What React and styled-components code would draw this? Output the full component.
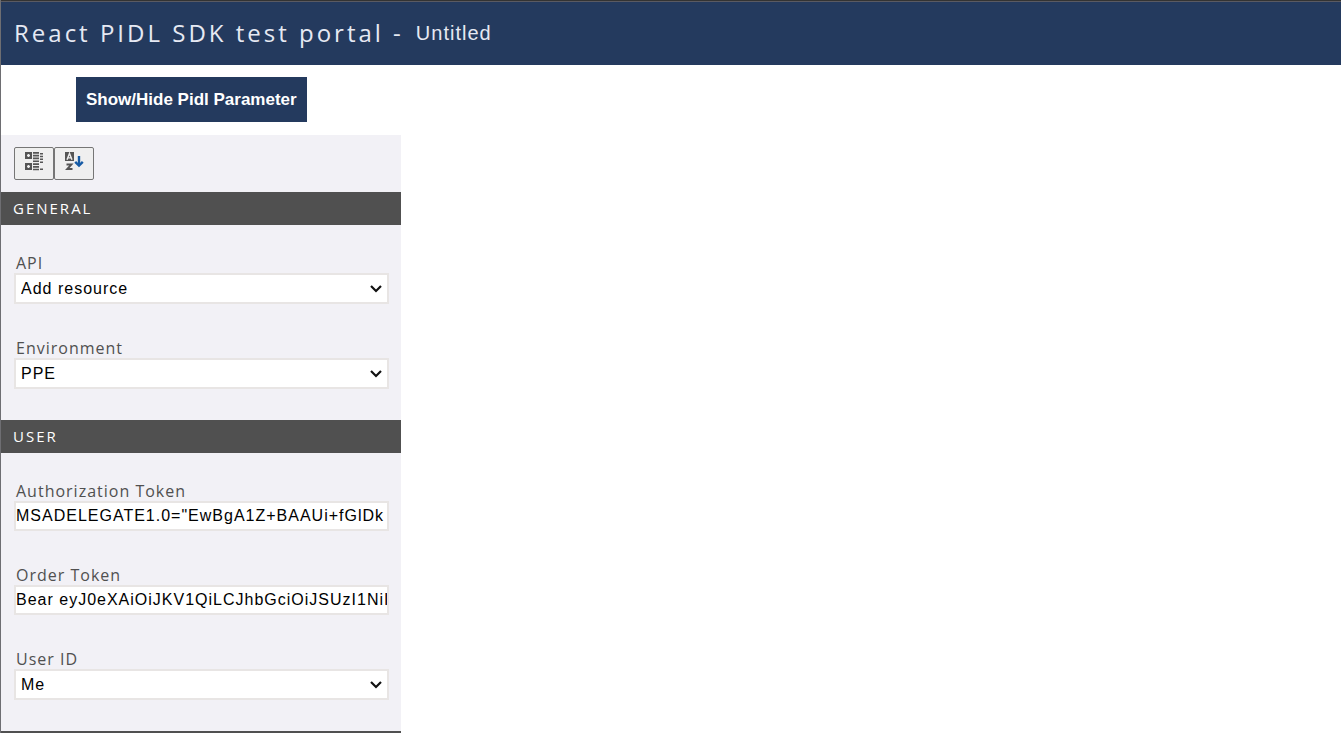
import React from "react";
import styled, { createGlobalStyle } from "styled-components";

const ui = '"Open Sans", "Noto Sans", sans-serif';
const control = '"Liberation Sans", Arial, sans-serif';

const GlobalStyle = createGlobalStyle`
  * { box-sizing: border-box; }
  body { margin: 0; background: #fff; font-family: ${ui}; }
`;

const Page = styled.div`
  min-height: 100vh;
  border-left: 1px solid #6e6e72;
`;

const Header = styled.header`
  display: flex;
  align-items: center;
  gap: 12px;
  height: 65px;
  padding: 0 13px;
  border-top: 1px solid #333;
  background: #243a5e;
  box-shadow: inset 0 1px #5a5a62;
  color: #e6e9f3;
`;

const Title = styled.h1`
  margin: 0;
  font: 400 24px/32px ${ui};
  letter-spacing: 3px;
  white-space: nowrap;
`;

const FileName = styled.span`
  font: 400 20px/32px ${control};
  letter-spacing: 1px;
`;

const Actions = styled.div`
  padding: 12px 75px 13px;
`;

const ToggleButton = styled.button`
  display: block;
  height: 45px;
  padding: 0 10px;
  border: 0;
  background: #243a5e;
  color: #fff;
  font: 700 17px/20px ${control};
  white-space: nowrap;
`;

const Panel = styled.form`
  width: 100%;
  max-width: 400px;
  background: #f2f1f6;
  border-bottom: 2px solid #505050;
`;

const SortBar = styled.div`
  display: flex;
  padding: 12px 13px;
`;

const SortButton = styled.button`
  display: flex;
  justify-content: center;
  width: 40px;
  height: 33px;
  padding: 3px 0 0;
  border: 1px solid #767676;
  border-radius: 2px;
  background: #efefef;
`;

const SectionTitle = styled.h2`
  margin: 0;
  padding: 0 12px 1px;
  background: #505050;
  color: #fff;
  font: 400 15px/32px ${ui};
  letter-spacing: 2px;
`;

const Fields = styled.div`
  display: flex;
  flex-direction: column;
  gap: 34px;
  padding: 28px 12px 31px 13px;
`;

const Field = styled.div`
  display: flex;
  flex-direction: column;
`;

const Label = styled.label`
  padding-left: 2px;
  color: #505050;
  font: 400 16px/20px ${ui};
  letter-spacing: 1px;
`;

const SelectBox = styled.div`
  position: relative;
`;

const Select = styled.select`
  display: block;
  width: 100%;
  height: 31px;
  padding: 0 26px 0 5px;
  border: 2px solid #e8e5e4;
  border-radius: 0;
  appearance: none;
  background: #fff;
  color: #000;
  font: 400 16px/20px ${control};
  letter-spacing: 1px;
`;

const Chevron = styled.svg`
  position: absolute;
  top: 11px;
  right: 6px;
  width: 14px;
  height: 10px;
  pointer-events: none;
`;

const TextInput = styled.input`
  width: 100%;
  height: 30px;
  padding: 0;
  border: 2px solid #e8e5e4;
  background: #fff;
  color: #000;
  font: 400 16px/20px ${control};
  letter-spacing: 1px;
`;

function GroupedIcon() {
  return (
    <svg width="20" height="20" viewBox="0 0 20 20" fill="#555" aria-hidden="true">
      <path fillRule="evenodd" d="M1 1h7v7H1zM3 3.8v1.4h.8V6h1.4v-.8H6V3.8h-.8V3H3.8v.8zM1 12h7v7H1zM3 14.8v1.4h.8v.8h1.4v-.8H6v-1.4h-.8V14H3.8v.8z" />
      <path d="M9 1h6v1.7H9zM9 3.8h6v1.7H9zM9 6.6h6v1.7H9zM9 9.4h6v1.7H9zM9 12.2h6v1.7H9zM9 15h6v1.7H9zM9 17.8h6v1.4H9zM16 2h3v1.5h-3zM16 4.8h3v1.5h-3zM16 7.6h3v1.5h-3zM16 10.4h3v1.5h-3zM16 17.6h3v1.5h-3z" />
    </svg>
  );
}

function AlphabeticalIcon() {
  return (
    <svg width="20" height="20" viewBox="0 0 20 20" fill="none" aria-hidden="true">
      <path fill="#555" d="M1 1h9v9H1z" />
      <path stroke="#eee" strokeWidth="1.4" d="M3 8.8 5.5 2.5 8 8.8M4 6.9h3" />
      <path stroke="#555" strokeWidth="2" d="M2.5 13.6h4.8l-4 4.4h5.2" />
      <path stroke="#165ba5" strokeWidth="2.4" d="M15 5v9" />
      <path stroke="#165ba5" strokeWidth="2.4" d="m11.2 10.8 3.8 3.8 3.8-3.8" />
    </svg>
  );
}

function SelectField({ id, label, options }) {
  return (
    <Field>
      <Label htmlFor={id}>{label}</Label>
      <SelectBox>
        <Select id={id}>
          {options.map((option) => (
            <option key={option}>{option}</option>
          ))}
        </Select>
        <Chevron viewBox="0 0 14 10" aria-hidden="true">
          <path d="m2 2 5 5 5-5" fill="none" stroke="#111" strokeWidth="2.2" />
        </Chevron>
      </SelectBox>
    </Field>
  );
}

function TextField({ id, label, value }) {
  return (
    <Field>
      <Label htmlFor={id}>{label}</Label>
      <TextInput id={id} type="text" defaultValue={value} spellCheck={false} />
    </Field>
  );
}

export default function App() {
  return (
    <>
      <GlobalStyle />
      <Page>
        <Header>
          <Title>React PIDL SDK test portal -</Title>
          <FileName>Untitled</FileName>
        </Header>
        <main>
          <Actions>
            <ToggleButton type="button">Show/Hide Pidl Parameter</ToggleButton>
          </Actions>
          <Panel>
            <SortBar>
              <SortButton type="button" aria-label="Group by category">
                <GroupedIcon />
              </SortButton>
              <SortButton type="button" aria-label="Sort alphabetically">
                <AlphabeticalIcon />
              </SortButton>
            </SortBar>
            <section>
              <SectionTitle>GENERAL</SectionTitle>
              <Fields>
                <SelectField id="api" label="API" options={["Add resource"]} />
                <SelectField id="environment" label="Environment" options={["PPE"]} />
              </Fields>
            </section>
            <section>
              <SectionTitle>USER</SectionTitle>
              <Fields>
                <TextField id="auth-token" label="Authorization Token" value={'MSADELEGATE1.0="EwBgA1Z+BAAUi+fGlDk'} />
                <TextField id="order-token" label="Order Token" value="Bear eyJ0eXAiOiJKV1QiLCJhbGciOiJSUzI1NiI" />
                <SelectField id="user-id" label="User ID" options={["Me"]} />
              </Fields>
            </section>
          </Panel>
        </main>
      </Page>
    </>
  );
}
